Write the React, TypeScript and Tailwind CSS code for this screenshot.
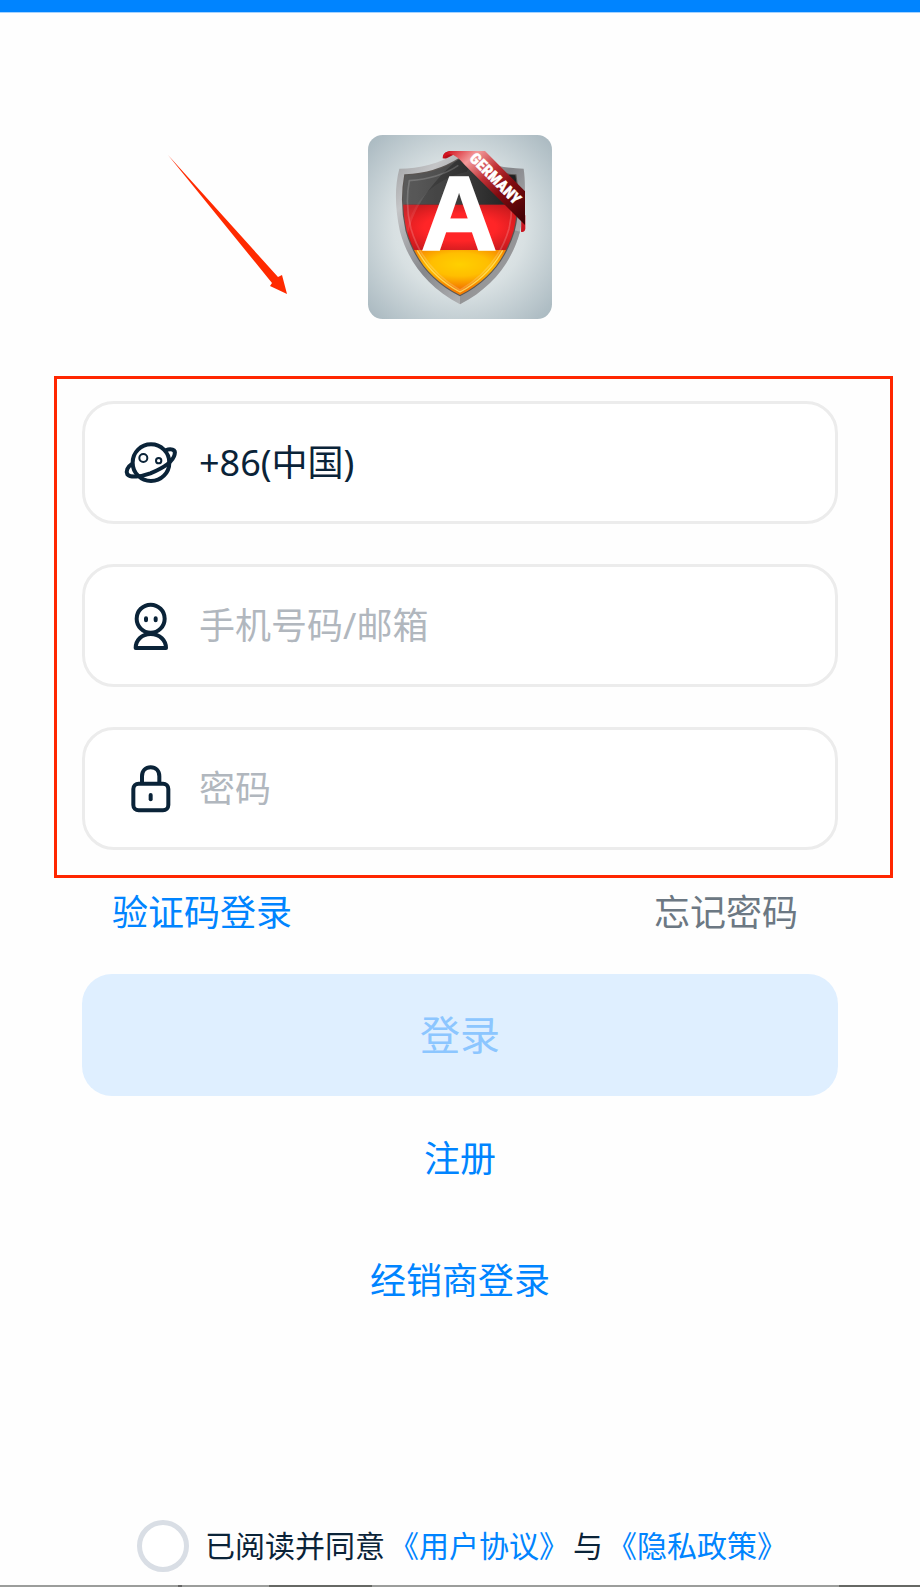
import type { ReactNode } from "react";

const FIELD =
  "flex h-[123px] items-center gap-5 rounded-[32px] border-3 border-[#ececec] bg-white pl-[38px] pr-10";
const FIELD_TEXT =
  "min-w-0 flex-1 appearance-none bg-transparent text-4xl leading-[52px] text-[#0a2338] outline-none placeholder:text-[#b1b7be]";

function FieldIcon({ viewBox, children }: { viewBox: string; children: ReactNode }) {
  return (
    <svg
      viewBox={viewBox}
      className="size-14 shrink-0"
      fill="none"
      stroke="#0a2338"
      strokeWidth={12}
      strokeLinecap="round"
      strokeLinejoin="round"
      aria-hidden="true"
    >
      {children}
    </svg>
  );
}

function Logo() {
  const shield =
    "M118 131 C180 131 235 118 300 78 C365 118 430 129 491 131 C498 180 496 245 480 320 C455 410 400 485 300 538 C200 485 145 410 120 320 C104 245 104 185 118 131 Z";
  const inner =
    "M136 151 C195 149 245 136 300 101 C355 136 410 149 466 151 C475 200 474 265 461 317 C437 397 390 465 300 510 C210 465 163 397 140 317 C127 260 126 205 136 151 Z";
  return (
    <svg viewBox="24 30 552 552" className="size-[184px]" role="img" aria-label="Germany">
      <defs>
        <radialGradient id="tile" cx="0.5" cy="0.5" r="0.72">
          <stop offset="0" stopColor="#f0f3f3" />
          <stop offset="0.5" stopColor="#d8e0e2" />
          <stop offset="1" stopColor="#a5b5bd" />
        </radialGradient>
        <linearGradient id="steel" x1="0" y1="0" x2="1" y2="1">
          <stop offset="0" stopColor="#9b9c9e" />
          <stop offset="0.2" stopColor="#c4c5c7" />
          <stop offset="0.5" stopColor="#85868a" />
          <stop offset="0.8" stopColor="#b9babc" />
          <stop offset="1" stopColor="#85868a" />
        </linearGradient>
        <linearGradient id="black" x1="0" y1="0" x2="1" y2="0">
          <stop offset="0" stopColor="#4a4a4a" />
          <stop offset="0.5" stopColor="#333" />
          <stop offset="1" stopColor="#111" />
        </linearGradient>
        <radialGradient id="red" cx="0.5" cy="0.5" r="0.6">
          <stop offset="0.5" stopColor="#ff1a1c" />
          <stop offset="1" stopColor="#c40d12" />
        </radialGradient>
        <radialGradient id="gold" cx="0.5" cy="0.3" r="0.6">
          <stop offset="0" stopColor="#ffd000" />
          <stop offset="0.4" stopColor="#ffbe00" />
          <stop offset="0.8" stopColor="#f57e00" />
        </radialGradient>
        <linearGradient id="ribbon" x1="0" y1="0" x2="1" y2="1">
          <stop offset="0" stopColor="#d31320" />
          <stop offset="0.2" stopColor="#f39a9a" />
          <stop offset="0.42" stopColor="#c03035" />
          <stop offset="0.62" stopColor="#820b10" />
          <stop offset="1" stopColor="#3a0003" />
        </linearGradient>
        <clipPath id="face">
          <path d={inner} />
        </clipPath>
      </defs>
      <rect x="24" y="30" width="552" height="552" rx="44" fill="url(#tile)" />
      <path d="M248 100 C248 84 260 78 275 78 L330 78 L330 110 Z" fill="#b50f1a" />
      <path d={shield} fill="url(#steel)" />
      <path d="M300 510 L300 538 C400 485 455 410 480 320 L463 316 C437 402 390 470 300 514 Z" fill="#77787a" opacity="0.5" />
      <path d={inner} fill="#222" stroke="#5a5552" strokeWidth="7" />
      <g clipPath="url(#face)">
        <rect x="120" y="90" width="360" height="149" fill="url(#black)" />
        <rect x="120" y="239" width="360" height="136" fill="url(#red)" />
        <rect x="120" y="375" width="360" height="145" fill="url(#gold)" />
        <path d="M120 90 H310 C235 150 165 230 143 330 L120 320 Z" fill="#fff" opacity="0.1" />
        <path d="M143 310 C155 230 225 160 320 140 L350 90 L480 90 V375 H160 Z" fill="#fff" opacity="0.05" />
      </g>
      <path
        d="M295 121 C250 152 205 163 148 167 C139 215 141 265 153 311 C175 387 222 450 300 496 C378 450 425 387 447 311 C453 285 455 265 455 245"
        fill="none"
        stroke="#fff"
        strokeOpacity="0.18"
        strokeWidth="5"
      />
      <path d="M172 376 C202 430 245 472 300 501 C355 472 398 430 428 376" fill="none" stroke="#ffe36a" strokeWidth="4" opacity="0.8" />
      <text
        x="297"
        y="372"
        textAnchor="middle"
        fill="#fff"
        stroke="#fff"
        strokeWidth="7"
        className="font-['Liberation_Sans',sans-serif] text-[314px] font-bold"
      >
        A
      </text>
      <path d="M496 270 V312 C494 320 489 322 483 320 L484 285 Z" fill="#c8141f" />
      <path d="M252 98 C258 88 280 86 300 92 L306 96 C298 84 280 78 262 80 C250 84 248 94 250 100 Z" fill="#d31320" />
      <path d="M270 78 L375 78 L495 199 V300 L318 124 C300 105 290 90 262 84 Z" fill="url(#ribbon)" />
      <text
        transform="translate(407 160) rotate(45)"
        y="17"
        textAnchor="middle"
        fill="#fff"
        stroke="#fff"
        strokeWidth="1"
        className="font-['Roboto_Condensed','Roboto',sans-serif] text-[47px] font-black"
      >
        GERMANY
      </text>
    </svg>
  );
}

export default function App() {
  return (
    <div className="relative flex min-h-screen flex-col overflow-hidden bg-[#fefefe] font-['Noto_Sans','Noto_Sans_CJK_SC',sans-serif] text-[#0a2338]">
      <div className="h-[13px] border-b border-[#a6d3ff] bg-[#0084ff]" />

      <header className="flex justify-center pt-[122px]">
        <Logo />
      </header>

      {/* hand-drawn arrow lying over the page */}
      <svg viewBox="0 0 120 140" className="pointer-events-none absolute left-[168px] top-[155px] h-[140px] w-[120px]" aria-hidden="true">
        <path d="M0 0 L110 122 L114 120 L119 139 L102 131 L104 128 Z" fill="#ff2a00" />
      </svg>

      <form className="flex flex-1 flex-col" onSubmit={(e) => e.preventDefault()}>
        <div className="ml-[54px] mr-[27px] mt-[57px] flex flex-col gap-10 border-3 border-[#ff2600] pb-[25px] pl-[25px] pr-[52px] pt-[22px]">
          <div className={FIELD}>
            <FieldIcon viewBox="249 223 168 168">
              <circle cx="333" cy="306" r="55" />
              <circle cx="310" cy="292" r="12" strokeWidth={6} />
              <circle cx="356" cy="300" r="8" strokeWidth={6} />
              <path d="M377 269 C392 263 408 266 404 281 C399 305 365 324 331 338 C303 348 272 352 262 341 C257 331 263 318 274 311" />
            </FieldIcon>
            <select aria-label="国家/地区" className={FIELD_TEXT} defaultValue="86">
              <option value="86">+86(中国)</option>
            </select>
          </div>
          <div className={FIELD}>
            <FieldIcon viewBox="159 112 168 168">
              <circle cx="242" cy="174" r="42" />
              <path d="M228 173 V179 M257 173 V179" />
              <path d="M242 220 C214 220 197 240 197 262 H288 C288 240 270 220 242 220 Z" />
            </FieldIcon>
            <input type="text" aria-label="手机号码/邮箱" placeholder="手机号码/邮箱" className={FIELD_TEXT} />
          </div>
          <div className={FIELD}>
            <FieldIcon viewBox="159 124 168 168">
              <rect x="190" y="192" width="105" height="80" rx="16" />
              <path d="M216 190 V170 C216 153 227 143 242 143 C257 143 268 153 268 170 V190" />
              <path d="M242 226 V239" />
            </FieldIcon>
            <input type="password" aria-label="密码" placeholder="密码" className={FIELD_TEXT} />
          </div>
        </div>

        <div className="mt-[9px] flex justify-between pl-[112px] pr-[122px] text-4xl leading-[52px]">
          <a href="#code" className="text-[#0084ff]">验证码登录</a>
          <a href="#forgot" className="text-[#6c7883]">忘记密码</a>
        </div>

        <button type="submit" disabled className="mx-[82px] mt-[35px] h-[122px] rounded-[30px] bg-[#dfefff] text-[40px] text-[#8cc6ff]">
          登录
        </button>

        <div className="flex flex-col items-center gap-[70px] pt-[37px] text-4xl leading-[52px] text-[#0084ff]">
          <a href="#register">注册</a>
          <a href="#dealer">经销商登录</a>
        </div>

        <div className="mt-auto flex items-center justify-center pb-[13px] pl-1 text-[30px] leading-[52px]">
          <input
            id="agree"
            type="checkbox"
            className="mr-4 size-[52px] shrink-0 appearance-none rounded-full border-5 border-[#d9dee5] bg-white checked:bg-[#0084ff]"
          />
          <div className="flex gap-1 whitespace-nowrap">
            <label htmlFor="agree">已阅读并同意</label>
            <a href="#terms" className="text-[#0084ff]">《用户协议》</a>
            <span>与</span>
            <a href="#privacy" className="text-[#0084ff]">《隐私政策》</a>
          </div>
        </div>
      </form>

      {/* edge of the dimmed content below */}
      <div className="flex h-0.5 bg-[#9b9d9b]">
        <div className="ml-[178px] w-1 bg-[#666]" />
        <div className="ml-[87px] w-[103px] bg-[#666864]" />
        <div className="ml-auto w-[81px] bg-[#666864]" />
      </div>
    </div>
  );
}
